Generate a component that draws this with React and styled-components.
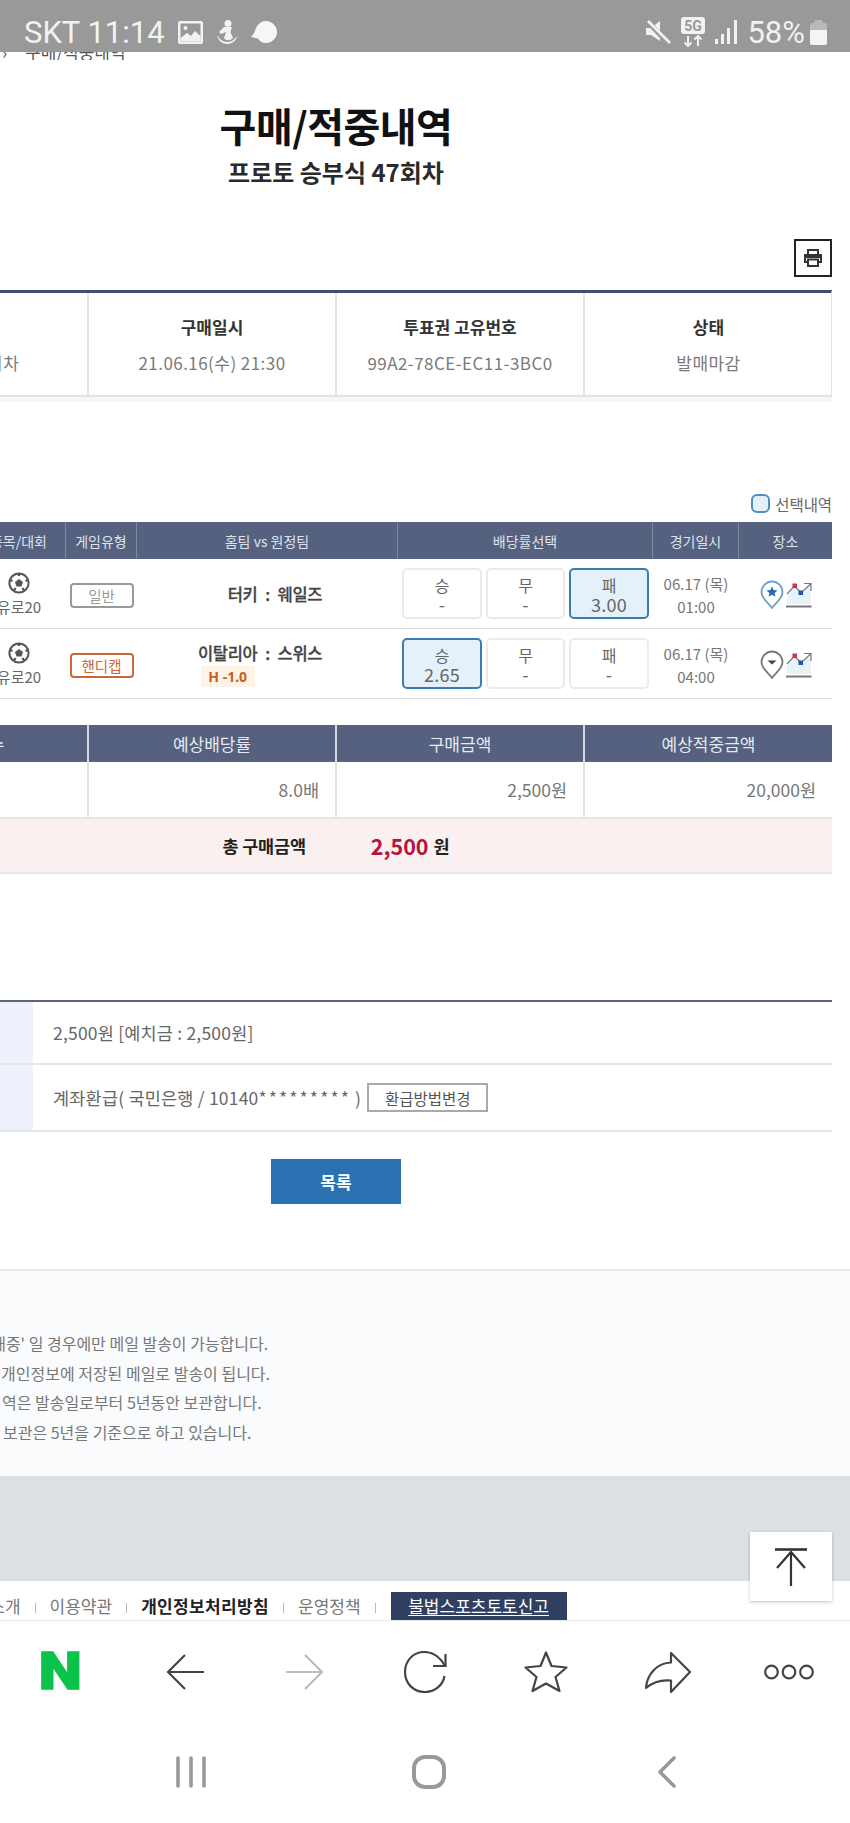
import React from 'react';
import styled, { createGlobalStyle } from 'styled-components';

const Global = createGlobalStyle`
  html, body { margin: 0; padding: 0; background: #fff; }
  * { box-sizing: border-box; }
  body { font-family: "Noto Sans CJK KR", "Noto Sans", sans-serif; color: #333; }
`;

const Page = styled.div`
  position: relative;
  width: 850px;
  height: 1823px;
  overflow: hidden;
  background: #fff;
`;

/* ---- phone status bar ---- */
const StatusBar = styled.div`
  height: 52px;
  background: #999;
  color: #f2f2f2;
  display: flex;
  align-items: center;
  justify-content: space-between;
  padding: 12px 23px 0 24px;
  font-family: Roboto, sans-serif;
  font-size: 31px;
`;
const StatusGroup = styled.div`
  display: flex;
  align-items: center;
  gap: ${p => p.$gap || 12}px;
`;
const StatusText = styled.span`
  line-height: 1;
  white-space: nowrap;
`;

/* ---- content column, scrolled 160px to the left ---- */
const Content = styled.main`
  width: 992px;
  margin-left: -160px;
`;
const Breadcrumb = styled.div`
  height: 8px;
  overflow: hidden;
  display: flex;
  align-items: flex-end;
  gap: 18px;
  padding-left: 162px;
  font-size: 17px;
  line-height: 16px;
  color: #555;
`;
const TitleBlock = styled.header`
  padding-top: 40px;
  text-align: center;
`;
const Title = styled.h1`
  margin: 0;
  height: 50px;
  font-size: 40px;
  line-height: 50px;
  font-weight: 700;
  color: #111;
  letter-spacing: -0.5px;
`;
const SubTitle = styled.h2`
  margin: 5px 0 0;
  height: 34px;
  font-size: 24px;
  line-height: 34px;
  font-weight: 700;
  color: #2a2a2a;
`;
const PrintRow = styled.div`
  display: flex;
  justify-content: flex-end;
  margin-top: 50px;
`;
const PrintButton = styled.button`
  width: 38px;
  height: 38px;
  padding: 0;
  border: 2px solid #222;
  background: #fff;
  display: flex;
  align-items: center;
  justify-content: center;
`;

const quarterColumns = '247px 248px 248px 249px';
const InfoGrid = styled.section`
  margin-top: 13px;
  display: grid;
  grid-template-columns: ${quarterColumns};
  height: 107px;
  border-top: 3px solid #3f4d70;
  border-bottom: 2px solid #e2e2e2;
  border-right: 1px solid #e2e2e2;
  box-shadow: 0 5px 0 #f6f6f6;
`;
const InfoCell = styled.div`
  border-left: 2px solid #e2e2e2;
  text-align: center;
  padding-top: 21px;
  &:first-child { border-left: 0; padding-left: 7px; }
`;
const InfoLabel = styled.div`
  font-size: 17px;
  line-height: 26px;
  font-weight: 700;
  color: #333;
`;
const InfoValue = styled.div`
  margin-top: 10px;
  font-size: 17px;
  line-height: 26px;
  color: #7a7a7a;
  letter-spacing: 0.45px;
`;

const Legend = styled.div`
  margin-top: 97px;
  height: 19px;
  display: flex;
  justify-content: flex-end;
  align-items: center;
  gap: 5px;
  font-size: 15.5px;
  color: #666;
  letter-spacing: -0.1px;
`;
const LegendSwatch = styled.span`
  width: 19px;
  height: 19px;
  border-radius: 6px;
  border: 2px solid #4f8fbb;
  background: #e4f1fa;
`;

const GameTable = styled.section`
  margin: 9px 0 0 132px;
  width: 860px;
`;
const columns = '94px 71px 261px 255px 86px 93px';
const GameHead = styled.div`
  display: grid;
  grid-template-columns: ${columns};
  height: 37px;
  background: #55617f;
`;
const GameHeadCell = styled.div`
  display: flex;
  align-items: center;
  justify-content: center;
  font-size: 14px;
  color: #dfe3ee;
  border-right: 1px solid #7c87a2;
  white-space: nowrap;
  &:last-child { border-right: 0; }
`;
const GameRow = styled.div`
  display: grid;
  grid-template-columns: ${columns};
  height: 70px;
  border-bottom: 1px solid #ddd;
  align-items: center;
`;
const LeagueCell = styled.div`
  display: flex;
  flex-direction: column;
  align-items: center;
  font-size: 15px;
  line-height: 20px;
  color: #666;
  gap: 3px;
  margin-top: 2px;
`;
const TypeCell = styled.div`
  display: flex;
  justify-content: center;
  margin-top: 3px;
`;
const TypeBadge = styled.span`
  width: 64px;
  height: 25px;
  border: 2px solid ${p => p.$tone};
  border-radius: 4px;
  color: ${p => p.$tone};
  font-size: 14.5px;
  line-height: 21px;
  text-align: center;
`;
const TeamsCell = styled.div`
  display: grid;
  grid-template-columns: 1fr 20px 1fr;
  align-items: start;
  font-size: 16.5px;
  line-height: 24px;
  font-weight: 500;
  color: #444;
  -webkit-text-stroke: 0.3px #444;
  letter-spacing: -0.3px;
`;
const HomeTeam = styled.div`
  justify-self: end;
  display: flex;
  flex-direction: column;
  align-items: center;
`;
const Colon = styled.div`
  text-align: center;
`;
const HandicapTag = styled.span`
  width: 54px;
  height: 21px;
  margin-top: 1px;
  background: #fdf3e6;
  color: #c8601f;
  font-size: 14px;
  line-height: 21px;
  text-align: center;
  font-weight: 700;
  -webkit-text-stroke: 0;
  letter-spacing: 0;
  font-family: "Noto Sans", sans-serif;
`;
const OddsCell = styled.div`
  display: grid;
  grid-template-columns: 80px 79px 80px;
  justify-content: center;
  gap: 4px;
`;
const OddsButton = styled.button`
  height: 51px;
  padding: 0;
  border-radius: 5px;
  border: 2px solid ${p => (p.$selected ? '#3a7eae' : '#ebebeb')};
  background: ${p => (p.$selected ? '#e4f1fa' : '#fff')};
  color: #666;
  font-family: inherit;
  display: flex;
  flex-direction: column;
  align-items: center;
  justify-content: center;
`;
const OddsName = styled.span`
  font-size: 16px;
  line-height: 20px;
`;
const OddsValue = styled.span`
  font-size: 18px;
  line-height: 18px;
  letter-spacing: 0.3px;
`;
const DateCell = styled.div`
  text-align: center;
  font-size: 15px;
  line-height: 23px;
  color: #777;
  white-space: nowrap;
  margin-top: 2px;
`;
const PlaceCell = styled.div`
  display: flex;
  justify-content: center;
  align-items: center;
  gap: 2px;
  margin-top: 2px;
`;

const SummaryHead = styled.div`
  margin-top: 26px;
  display: grid;
  grid-template-columns: ${quarterColumns};
  height: 37px;
  background: #55617f;
`;
const SummaryHeadCell = styled.div`
  display: flex;
  align-items: center;
  justify-content: center;
  font-size: 17px;
  color: #e6e9f1;
  border-left: 2px solid #d5d9e2;
  &:first-child { border-left: 0; }
`;
const SummaryRow = styled.div`
  display: grid;
  grid-template-columns: ${quarterColumns};
  height: 57px;
  border-bottom: 2px solid #e6e6e6;
`;
const SummaryCell = styled.div`
  display: flex;
  align-items: center;
  justify-content: ${p => (p.$center ? 'center' : 'flex-end')};
  padding-right: ${p => (p.$center ? 0 : 16)}px;
  font-size: 17.5px;
  color: #777;
  border-left: 2px solid #e2e2e2;
  &:first-child { border-left: 0; }
`;
const TotalRow = styled.div`
  height: 55px;
  background: #fbf0f0;
  border-bottom: 2px solid #e8e8e8;
  display: flex;
  align-items: center;
  justify-content: center;
  gap: 65px;
  font-weight: 700;
  font-size: 17.5px;
  color: #222;
  letter-spacing: -0.2px;
`;
const TotalAmount = styled.span`
  display: flex;
  align-items: center;
  gap: 5px;
`;
const TotalNumber = styled.span`
  font-size: 21.5px;
  color: #b5143f;
  letter-spacing: 0;
`;

const PayTable = styled.section`
  margin-top: 126px;
  border-top: 2px solid #5b6579;
`;
const PayRow = styled.div`
  display: grid;
  grid-template-columns: 193px 1fr;
  height: ${p => p.$h}px;
  border-bottom: 2px solid #e6e6e6;
`;
const PayHead = styled.div`
  background: #eef1fb;
`;
const PayValue = styled.div`
  display: flex;
  align-items: center;
  gap: 6px;
  padding-left: 20px;
  font-size: 17.5px;
  color: #666;
  white-space: pre;
  letter-spacing: 0.2px;
`;
const Masked = styled.span`
  letter-spacing: 2.1px;
`;
const ChangeButton = styled.button`
  width: 121px;
  height: 29px;
  padding: 0;
  background: #fff;
  border: 2px solid #aaa;
  color: #555;
  font-family: inherit;
  font-size: 15.5px;
`;
const ButtonRow = styled.div`
  display: flex;
  justify-content: center;
  margin-top: 27px;
`;
const ListButton = styled.button`
  width: 130px;
  height: 45px;
  padding: 0;
  border: 0;
  background: #2b72b3;
  color: #fff;
  font-family: inherit;
  font-size: 17px;
  font-weight: 700;
`;

/* ---- full width lower sections ---- */
const Notice = styled.section`
  margin-top: 65px;
  height: 208px;
  background: #fafbfd;
  border-top: 2px solid #e7e7e7;
  border-bottom: 1px solid #e0e0e0;
  padding-top: 58px;
`;
const NoticeLine = styled.p`
  margin: 0 0 0 ${p => p.$left}px;
  height: 29.5px;
  font-size: 16px;
  line-height: 29.5px;
  color: #777;
  white-space: nowrap;
`;
const GreyBand = styled.div`
  height: 104px;
  background: #dcdfe4;
`;
const Footer = styled.footer`
  height: 40px;
  display: flex;
  align-items: flex-end;
  border-bottom: 1px solid #e4e6ea;
  margin-left: -42px;
`;
const FooterLink = styled.a`
  font-size: 17px;
  line-height: 28px;
  height: 28px;
  color: ${p => (p.$strong ? '#222' : '#777')};
  font-weight: ${p => (p.$strong ? 700 : 400)};
  letter-spacing: ${p => (p.$strong ? 0.35 : 0)}px;
  white-space: nowrap;
  &::after {
    content: '';
    display: inline-block;
    width: 1px;
    height: 10px;
    margin: 0 14px;
    background: #bbb;
  }
`;
const ReportLink = styled.a`
  width: 176px;
  height: 28px;
  margin-left: 1px;
  background: #2f4063;
  color: #fff;
  font-size: 17px;
  line-height: 27px;
  text-align: center;
  text-decoration: underline;
  text-underline-offset: 2px;
`;
const TopButton = styled.button`
  position: absolute;
  left: 750px;
  top: 1532px;
  width: 82px;
  height: 69px;
  padding: 0;
  border: 0;
  background: #fff;
  box-shadow: 0 1px 3px rgba(0, 0, 0, 0.25);
  display: flex;
  align-items: center;
  justify-content: center;
`;

const Toolbar = styled.nav`
  height: 108px;
  display: grid;
  grid-template-columns: repeat(7, 1fr);
  align-items: center;
  padding-bottom: 6px;
`;
const ToolSlot = styled.div`
  display: flex;
  justify-content: center;
  align-items: center;
`;
const NaverMark = styled.span`
  display: inline-block;
  font-family: Roboto, sans-serif;
  font-weight: 900;
  font-size: 52px;
  line-height: 40px;
  color: #0bc34a;
  -webkit-text-stroke: 1.5px #0bc34a;
  transform: scaleX(1.18);
`;
const SystemNav = styled.nav`
  height: 93px;
  display: grid;
  grid-template-columns: repeat(3, 238px);
  justify-content: center;
  align-items: center;
  padding-left: 8px;
  padding-bottom: 8px;
`;

/* ---- drawings ---- */
const GalleryIcon = () => (
  <svg width="25" height="23" viewBox="0 0 25 23">
    <rect x="0" y="0" width="25" height="23" rx="2" fill="#f2f2f2" />
    <rect x="2.5" y="2.5" width="20" height="18" fill="#999" />
    <circle cx="7.5" cy="7" r="2" fill="#f2f2f2" />
    <path d="M2.5 20.5 V17 L9 12 L13 15 L17 10 L22.5 15 V20.5 Z" fill="#f2f2f2" />
  </svg>
);
const FigureIcon = () => (
  <svg width="22" height="24" viewBox="0 0 22 24" fill="#f2f2f2">
    <circle cx="12" cy="3.5" r="3.5" />
    <path d="M8 7 H16 L14.5 12 L17 18 C14 21 10 21 8 18 L10 12 L5 14 L3 12 Z" />
    <path d="M1 15 C2 21 7 24 11 24 C15 24 20 22 21 16 L18.5 19 C15 23 8 23 4 19 Z" />
  </svg>
);
const BubbleIcon = () => (
  <svg width="26" height="22" viewBox="0 0 26 22" fill="#f6f6f6">
    <path d="M15 0 C21 0 26 5 26 11 C26 17 21 22 15 22 C11 22 8.5 20 7 17.5 L0 16 C3 13 4 10 5 7 C7 3 10.5 0 15 0 Z" />
  </svg>
);
const MuteIcon = () => (
  <svg width="25" height="25" viewBox="0 0 25 25">
    <path d="M0 8 H5 L14 1 V21 L5 15 H0 Z" fill="#f2f2f2" />
    <path d="M2 2 L23 24" stroke="#999" strokeWidth="5" />
    <path d="M2 1 L24 23" stroke="#f2f2f2" strokeWidth="2.6" />
  </svg>
);
const FiveGIcon = () => (
  <svg width="24" height="30" viewBox="0 0 24 30">
    <rect x="0" y="0" width="24" height="17" rx="3" fill="#f2f2f2" />
    <text x="12" y="14" textAnchor="middle" fontFamily="Roboto, sans-serif" fontWeight="700" fontSize="14" fill="#999">5G</text>
    <path d="M7 19 V29 M3.5 25.5 L7 29 L10.5 25.5 M17 29 V19 M13.5 22.5 L17 19 L20.5 22.5" stroke="#f2f2f2" strokeWidth="2" fill="none" />
  </svg>
);
const SignalIcon = () => (
  <svg width="22" height="24" viewBox="0 0 22 24" fill="#f2f2f2">
    <rect x="0" y="19" width="3" height="5" />
    <rect x="6" y="14" width="3" height="10" />
    <rect x="12" y="8" width="3" height="16" />
    <rect x="19" y="0" width="3" height="24" />
  </svg>
);
const BatteryIcon = () => (
  <svg width="17" height="25" viewBox="0 0 17 25">
    <path d="M4 2 Q4 0 6 0 H11 Q13 0 13 2 V3 H15 Q17 3 17 5 V10 H0 V5 Q0 3 2 3 H4 Z" fill="#b9b9b9" />
    <path d="M0 10 H17 V23 Q17 25 15 25 H2 Q0 25 0 23 Z" fill="#f4f4f4" />
  </svg>
);
const PrinterIcon = () => (
  <svg width="20" height="20" viewBox="0 0 20 20" fill="none" stroke="#333" strokeWidth="2">
    <path d="M5 6 V2 H15 V6" />
    <path d="M5 14 H2 V7 H18 V14 H15" />
    <rect x="5" y="11.5" width="10" height="6.5" />
    <path d="M2 9 H18" />
  </svg>
);
const BallIcon = () => (
  <svg width="22" height="22" viewBox="0 0 22 22">
    <circle cx="11" cy="11" r="9.6" fill="#fff" stroke="#555" strokeWidth="2" />
    <path d="M11 7 L15 10 L13.5 14.5 H8.5 L7 10 Z" fill="#555" />
    <path d="M11 1.5 V4 M20 8 L17.5 9 M2 8 L4.5 9 M6 18.5 L7.5 16 M16 18.5 L14.5 16" stroke="#555" strokeWidth="2.4" />
  </svg>
);
const StarPin = () => (
  <svg width="24" height="30" viewBox="0 0 24 30">
    <path d="M12 28 C9 23 1.5 19 1.5 12 A10.5 10.5 0 0 1 22.5 12 C22.5 19 15 23 12 28 Z" fill="#fff" stroke="#6da3c9" strokeWidth="1.8" strokeLinejoin="round" />
    <path d="M12 6.5 L13.6 10 L17.5 10.4 L14.6 13 L15.4 16.8 L12 14.8 L8.6 16.8 L9.4 13 L6.5 10.4 L10.4 10 Z" fill="#2b6cb0" />
  </svg>
);
const ArrowPin = () => (
  <svg width="24" height="30" viewBox="0 0 24 30">
    <path d="M12 28 C9 23 1.5 19 1.5 12 A10.5 10.5 0 0 1 22.5 12 C22.5 19 15 23 12 28 Z" fill="#fff" stroke="#777" strokeWidth="1.8" strokeLinejoin="round" />
    <path d="M7.5 10.5 H16.5 L12 14.5 Z" fill="#444" />
  </svg>
);
const TrendIcon = () => (
  <svg width="26" height="26" viewBox="0 0 26 26">
    <path d="M1 14 L9 5 L15 12 L25 3 V22 H1 Z" fill="#e8f2fb" />
    <path d="M1 12 L8.5 4 L15 11 L24.5 2 M18 1.5 H25 V9" fill="none" stroke="#777" strokeWidth="1.2" />
    <rect x="6.5" y="1.5" width="4.5" height="4.5" fill="#d9303f" />
    <rect x="12.5" y="8.5" width="4.5" height="4.5" fill="#1f54a8" />
    <path d="M0 24.5 H25.5" stroke="#777" strokeWidth="2" />
  </svg>
);
const UpIcon = () => (
  <svg width="34" height="38" viewBox="0 0 34 38" fill="none" stroke="#333" strokeWidth="2.2">
    <path d="M1 1.5 H33" strokeWidth="2.6" />
    <path d="M17 4 V38" />
    <path d="M3 20 L17 4 L31 20" />
  </svg>
);
const BackIcon = ({ color = '#444' }) => (
  <svg width="38" height="36" viewBox="0 0 38 36" fill="none" stroke={color} strokeWidth="2.2" style={{ marginLeft: 5 }}>
    <path d="M19 1 L2 18 L19 35 M2 18 H38" />
  </svg>
);
const ForwardIcon = () => (
  <svg width="38" height="36" viewBox="0 0 38 36" fill="none" stroke="#bbb" strokeWidth="2.2" style={{ marginLeft: 3 }}>
    <path d="M19 1 L36 18 L19 35 M36 18 H0" />
  </svg>
);
const ReloadIcon = () => (
  <svg width="44" height="42" viewBox="0 0 44 42" fill="none" stroke="#444" strokeWidth="2.2">
    <path d="M41.5 25 C40 34 32 41 22 41 C10 41 2 32 2 21 C2 10 10 1 21 1 C30 1 37 6 42 15" />
    <path d="M42.5 3 V15 H30" />
  </svg>
);
const StarIcon = () => (
  <svg width="44" height="42" viewBox="0 0 44 42" fill="none" stroke="#444" strokeWidth="2.2" strokeLinejoin="round">
    <path d="M22 1.5 L27.5 15 L42.5 16.5 L31.5 26 L35.5 40 L22 32.5 L8.5 40 L12.5 26 L1.5 16.5 L16.5 15 Z" />
  </svg>
);
const ShareIcon = () => (
  <svg width="46" height="41" viewBox="0 0 46 41" fill="none" stroke="#444" strokeWidth="2.2" strokeLinejoin="round">
    <path d="M45 20 L26 1 V10.5 C12 11 2 22 1 36 C8 30 16 27.5 26 28.5 V40 Z" />
  </svg>
);
const MoreIcon = () => (
  <svg width="50" height="16" viewBox="0 0 50 16" fill="none" stroke="#444" strokeWidth="2.2">
    <circle cx="7.5" cy="8" r="6.3" />
    <circle cx="25" cy="8" r="6.3" />
    <circle cx="42.5" cy="8" r="6.3" />
  </svg>
);
const RecentsIcon = () => (
  <svg width="30" height="32" viewBox="0 0 30 32" stroke="#999" strokeWidth="3.6" strokeLinecap="round">
    <path d="M2 2 V30 M15 2 V30 M28 2 V30" />
  </svg>
);
const HomeIcon = () => (
  <svg width="34" height="34" viewBox="0 0 34 34" fill="none" stroke="#999" strokeWidth="4">
    <rect x="2" y="2" width="30" height="30" rx="11" />
  </svg>
);
const ReturnIcon = () => (
  <svg width="18" height="32" viewBox="0 0 18 32" fill="none" stroke="#999" strokeWidth="3.6" strokeLinecap="round" strokeLinejoin="round">
    <path d="M16 2 L2 16 L16 30" />
  </svg>
);

const games = [
  {
    type: '일반', tone: '#999', home: '터키', away: '웨일즈', time: '01:00', selected: 2,
    odds: ['-', '-', '3.00'], pin: <StarPin />,
  },
  {
    type: '핸디캡', tone: '#c8673a', home: '이탈리아', away: '스위스', handicap: 'H -1.0', time: '04:00', selected: 0,
    odds: ['2.65', '-', '-'], pin: <ArrowPin />,
  },
];
const outcomes = ['승', '무', '패'];

export default function App() {
  return (
    <Page>
      <Global />
      <StatusBar>
        <StatusGroup $gap={13}>
          <StatusText>SKT 11:14</StatusText>
          <GalleryIcon />
          <FigureIcon />
          <BubbleIcon />
        </StatusGroup>
        <StatusGroup $gap={10}>
          <MuteIcon />
          <FiveGIcon />
          <SignalIcon />
          <StatusGroup $gap={5}>
            <StatusText>58%</StatusText>
            <BatteryIcon />
          </StatusGroup>
        </StatusGroup>
      </StatusBar>

      <Content>
        <Breadcrumb><span>›</span><span>구매/적중내역</span></Breadcrumb>
        <TitleBlock>
          <Title>구매/적중내역</Title>
          <SubTitle>프로토 승부식 47회차</SubTitle>
        </TitleBlock>
        <PrintRow>
          <PrintButton aria-label="인쇄"><PrinterIcon /></PrintButton>
        </PrintRow>

        <InfoGrid>
          <InfoCell><InfoLabel>게임명</InfoLabel><InfoValue>승부식 47회차</InfoValue></InfoCell>
          <InfoCell><InfoLabel>구매일시</InfoLabel><InfoValue>21.06.16(수) 21:30</InfoValue></InfoCell>
          <InfoCell><InfoLabel>투표권 고유번호</InfoLabel><InfoValue>99A2-78CE-EC11-3BC0</InfoValue></InfoCell>
          <InfoCell><InfoLabel>상태</InfoLabel><InfoValue>발매마감</InfoValue></InfoCell>
        </InfoGrid>

        <Legend><LegendSwatch />선택내역</Legend>

        <GameTable>
          <GameHead>
            <GameHeadCell>종목/대회</GameHeadCell>
            <GameHeadCell>게임유형</GameHeadCell>
            <GameHeadCell>홈팀 vs 원정팀</GameHeadCell>
            <GameHeadCell>배당률선택</GameHeadCell>
            <GameHeadCell>경기일시</GameHeadCell>
            <GameHeadCell>장소</GameHeadCell>
          </GameHead>
          {games.map(g => (
            <GameRow key={g.home}>
              <LeagueCell><BallIcon />유로20</LeagueCell>
              <TypeCell><TypeBadge $tone={g.tone}>{g.type}</TypeBadge></TypeCell>
              <TeamsCell>
                <HomeTeam>
                  {g.home}
                  {g.handicap && <HandicapTag>{g.handicap}</HandicapTag>}
                </HomeTeam>
                <Colon>:</Colon>
                <div>{g.away}</div>
              </TeamsCell>
              <OddsCell>
                {outcomes.map((name, i) => (
                  <OddsButton key={name} $selected={g.selected === i}>
                    <OddsName>{name}</OddsName>
                    <OddsValue>{g.odds[i]}</OddsValue>
                  </OddsButton>
                ))}
              </OddsCell>
              <DateCell>06.17 (목)<br />{g.time}</DateCell>
              <PlaceCell>{g.pin}<TrendIcon /></PlaceCell>
            </GameRow>
          ))}
        </GameTable>

        <SummaryHead>
          <SummaryHeadCell>선택 경기수</SummaryHeadCell>
          <SummaryHeadCell>예상배당률</SummaryHeadCell>
          <SummaryHeadCell>구매금액</SummaryHeadCell>
          <SummaryHeadCell>예상적중금액</SummaryHeadCell>
        </SummaryHead>
        <SummaryRow>
          <SummaryCell $center>2</SummaryCell>
          <SummaryCell>8.0배</SummaryCell>
          <SummaryCell>2,500원</SummaryCell>
          <SummaryCell>20,000원</SummaryCell>
        </SummaryRow>
        <TotalRow>
          <span>총 구매금액</span>
          <TotalAmount><TotalNumber>2,500</TotalNumber>원</TotalAmount>
        </TotalRow>

        <PayTable>
          <PayRow $h={63}>
            <PayHead />
            <PayValue>2,500원 [예치금 : 2,500원]</PayValue>
          </PayRow>
          <PayRow $h={67}>
            <PayHead />
            <PayValue>
              <span>계좌환급( 국민은행 / 10140<Masked>*********</Masked> )</span>
              <ChangeButton>환급방법변경</ChangeButton>
            </PayValue>
          </PayRow>
        </PayTable>
        <ButtonRow><ListButton>목록</ListButton></ButtonRow>
      </Content>

      <Notice>
        <NoticeLine $left={-28}>'발매중' 일 경우에만 메일 발송이 가능합니다.</NoticeLine>
        <NoticeLine $left={1}>개인정보에 저장된 메일로 발송이 됩니다.</NoticeLine>
        <NoticeLine $left={2}>역은 발송일로부터 5년동안 보관합니다.</NoticeLine>
        <NoticeLine $left={3}>보관은 5년을 기준으로 하고 있습니다.</NoticeLine>
      </Notice>
      <GreyBand />
      <Footer>
        <FooterLink>회사소개</FooterLink>
        <FooterLink>이용약관</FooterLink>
        <FooterLink $strong>개인정보처리방침</FooterLink>
        <FooterLink>운영정책</FooterLink>
        <ReportLink>불법스포츠토토신고</ReportLink>
      </Footer>
      <TopButton aria-label="맨 위로"><UpIcon /></TopButton>

      <Toolbar>
        <ToolSlot><NaverMark>N</NaverMark></ToolSlot>
        <ToolSlot><BackIcon /></ToolSlot>
        <ToolSlot><ForwardIcon /></ToolSlot>
        <ToolSlot><ReloadIcon /></ToolSlot>
        <ToolSlot><StarIcon /></ToolSlot>
        <ToolSlot><ShareIcon /></ToolSlot>
        <ToolSlot><MoreIcon /></ToolSlot>
      </Toolbar>
      <SystemNav>
        <ToolSlot><RecentsIcon /></ToolSlot>
        <ToolSlot><HomeIcon /></ToolSlot>
        <ToolSlot><ReturnIcon /></ToolSlot>
      </SystemNav>
    </Page>
  );
}
